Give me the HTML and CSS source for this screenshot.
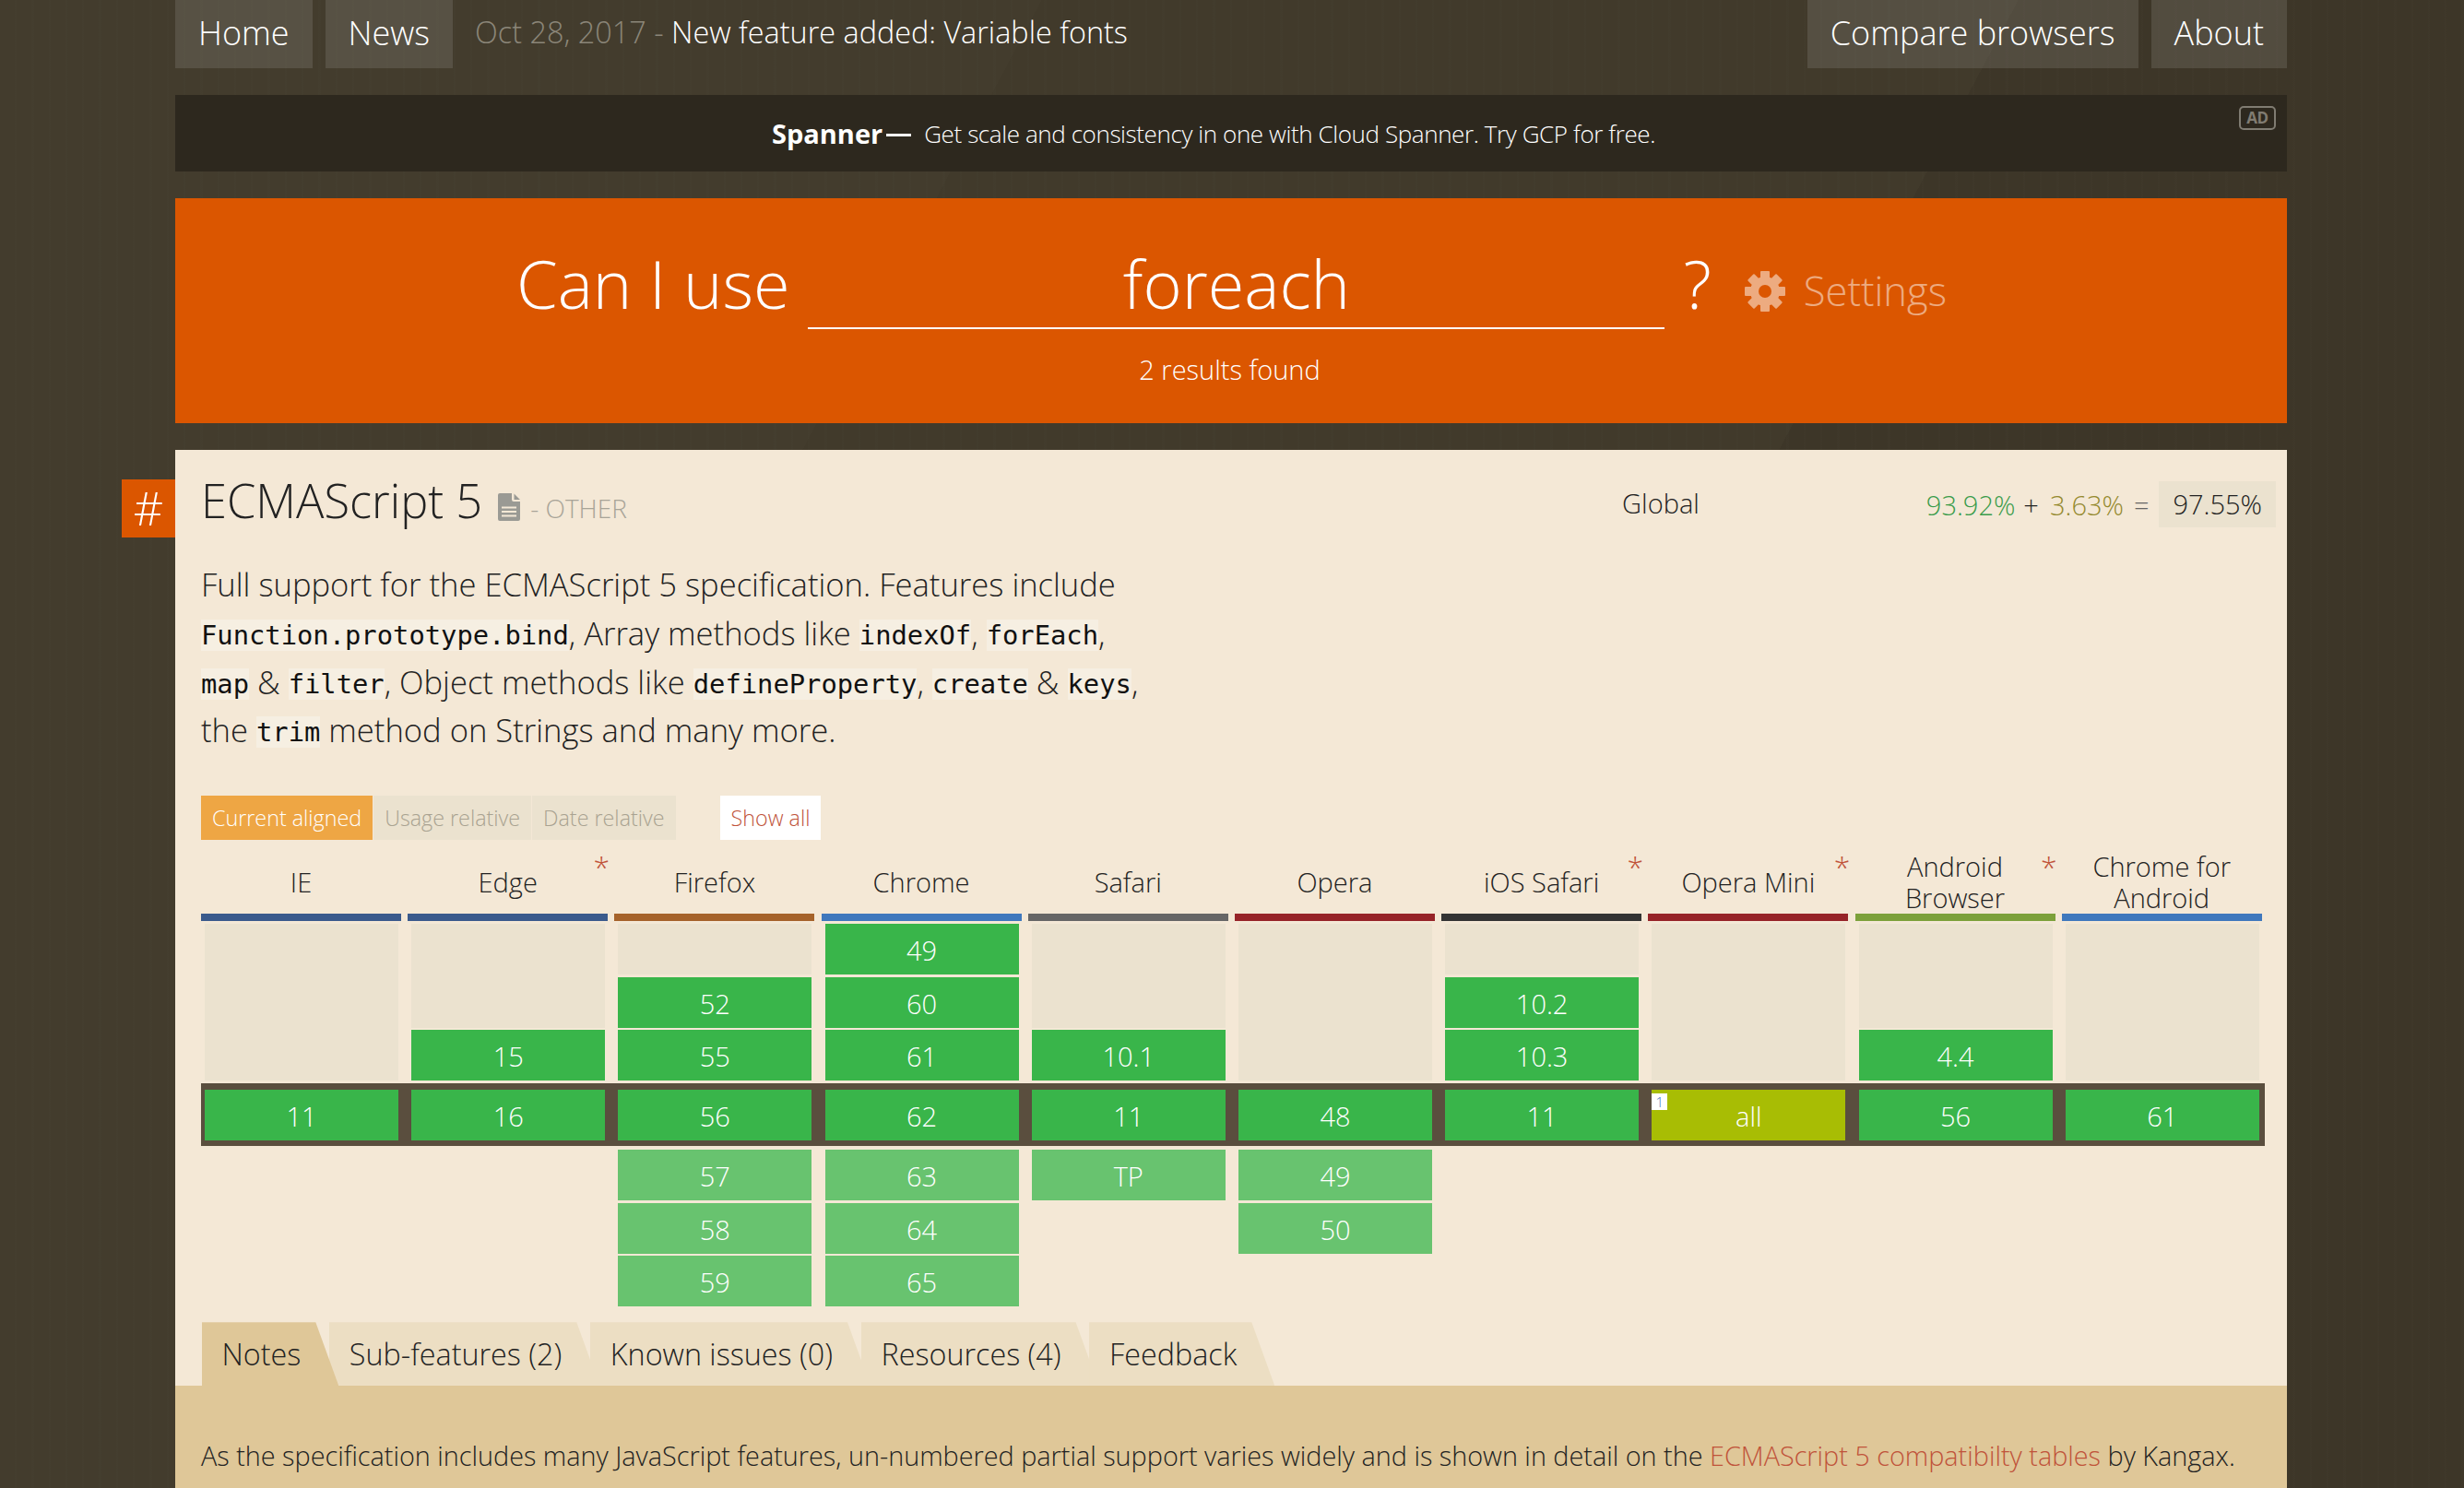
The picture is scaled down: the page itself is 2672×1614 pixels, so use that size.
FILE: index.html
```html
<!DOCTYPE html>
<html lang="en">

<head>
    <meta charset="UTF-8">
    <title>Can I use... foreach</title>
    <link rel="stylesheet" href="styles.css">
</head>

<body>
    <div class="page">
        <nav class="topnav">
            <a class="navbtn">Home</a>
            <a class="navbtn">News</a>
            <div class="newsline"><span class="newsdate">Oct 28, 2017 - </span>New feature added: Variable fonts</div>
            <a class="navbtn navbtn-push">Compare browsers</a>
            <a class="navbtn">About</a>
        </nav>

        <div class="adbar">
            <strong>Spanner</strong><i class="addash"></i><span>Get scale and consistency in one with Cloud Spanner. Try GCP for free.</span>
            <div class="adbadge">AD</div>
        </div>

        <header class="search">
            <div class="searchrow">
                <h1 class="searchlabel">Can I use</h1>
                <div class="searchinput">foreach</div>
                <div class="searchq">?</div>
                <div class="settings">
                    <svg class="gear" viewBox="0 0 44 44" width="44" height="44">
                        <g fill="#fff">
                            <rect x="17" y="0" width="10" height="44" rx="1"/>
                            <rect x="17" y="0" width="10" height="44" rx="1" transform="rotate(45 22 22)"/>
                            <rect x="17" y="0" width="10" height="44" rx="1" transform="rotate(90 22 22)"/>
                            <rect x="17" y="0" width="10" height="44" rx="1" transform="rotate(135 22 22)"/>
                        </g>
                        <circle cx="22" cy="22" r="11.5" fill="none" stroke="#fff" stroke-width="9"/>
                        <circle cx="22" cy="22" r="7" fill="#db5600"/>
                    </svg>
                    <span>Settings</span>
                </div>
            </div>
            <div class="results">2 results found</div>
        </header>

        <article class="feature">
            <a class="hash">#</a>
            <div class="featurehead">
                <h2 class="featuretitle">ECMAScript 5</h2>
                <svg class="docicon" viewBox="0 0 24 30" width="24" height="30">
                    <path fill="#9a9a94" fill-rule="evenodd" d="M2 0H15V7Q15 9 17 9H24V28Q24 30 22 30H2Q0 30 0 28V2Q0 0 2 0ZM17.500 0.500L24 7H17.500ZM4 14.500V16.500H20V14.500ZM4 19V21H20V19ZM4 23.500V25.500H20V23.500Z"/>
                </svg>
                <span class="featurecat">- OTHER</span>
                <div class="usage">
                    <span class="usagelabel">Global</span>
                    <span class="usagegreen">93.92%</span>
                    <span class="usageop">+</span>
                    <span class="usageolive">3.63%</span>
                    <span class="usageeq">=</span>
                    <span class="usagetotal">97.55%</span>
                </div>
            </div>

            <p class="featuredesc">Full support for the ECMAScript 5 specification. Features include <code>Function.prototype.bind</code>, Array methods like <code>indexOf</code>, <code>forEach</code>, <code>map</code> &amp; <code>filter</code>, Object methods like <code>defineProperty</code>, <code>create</code> &amp; <code>keys</code>, the <code>trim</code> method on Strings and many more.</p>

            <div class="viewbar">
                <a class="viewbtn viewbtn-on">Current aligned</a>
                <a class="viewbtn">Usage relative</a>
                <a class="viewbtn">Date relative</a>
                <a class="showall">Show all</a>
            </div>

            <div class="browsers">
                <div class="browser b-ie">IE</div>
                <div class="browser b-edge star">Edge</div>
                <div class="browser b-ff">Firefox</div>
                <div class="browser b-ch">Chrome</div>
                <div class="browser b-sa">Safari</div>
                <div class="browser b-op">Opera</div>
                <div class="browser b-ios star">iOS Safari</div>
                <div class="browser b-om star">Opera Mini</div>
                <div class="browser b-an star">Android<br>Browser</div>
                <div class="browser b-ca">Chrome for<br>Android</div>
            </div>

            <div class="cols cols-past">
                <div class="col"><div class="cell none fill"></div></div>
                <div class="col"><div class="cell none fill"></div><div class="cell yes">15</div></div>
                <div class="col"><div class="cell none fill"></div><div class="cell yes">52</div><div class="cell yes">55</div></div>
                <div class="col"><div class="cell yes">49</div><div class="cell yes">60</div><div class="cell yes">61</div></div>
                <div class="col"><div class="cell none fill"></div><div class="cell yes">10.1</div></div>
                <div class="col"><div class="cell none fill"></div></div>
                <div class="col"><div class="cell none fill"></div><div class="cell yes">10.2</div><div class="cell yes">10.3</div></div>
                <div class="col"><div class="cell none fill"></div></div>
                <div class="col"><div class="cell none fill"></div><div class="cell yes">4.4</div></div>
                <div class="col"><div class="cell none fill"></div></div>
            </div>

            <div class="cols cols-now">
                <div class="col"><div class="cell yes">11</div></div>
                <div class="col"><div class="cell yes">16</div></div>
                <div class="col"><div class="cell yes">56</div></div>
                <div class="col"><div class="cell yes">62</div></div>
                <div class="col"><div class="cell yes">11</div></div>
                <div class="col"><div class="cell yes">48</div></div>
                <div class="col"><div class="cell yes">11</div></div>
                <div class="col"><div class="cell partial"><sup class="noteflag">1</sup>all</div></div>
                <div class="col"><div class="cell yes">56</div></div>
                <div class="col"><div class="cell yes">61</div></div>
            </div>

            <div class="cols cols-future">
                <div class="col"></div>
                <div class="col"></div>
                <div class="col"><div class="cell soon">57</div><div class="cell soon">58</div><div class="cell soon">59</div></div>
                <div class="col"><div class="cell soon">63</div><div class="cell soon">64</div><div class="cell soon">65</div></div>
                <div class="col"><div class="cell soon">TP</div></div>
                <div class="col"><div class="cell soon">49</div><div class="cell soon">50</div></div>
                <div class="col"></div>
                <div class="col"></div>
                <div class="col"></div>
                <div class="col"></div>
            </div>

            <div class="tabs">
                <a class="tab tab-on">Notes</a>
                <a class="tab">Sub-features (2)</a>
                <a class="tab">Known issues (0)</a>
                <a class="tab">Resources (4)</a>
                <a class="tab">Feedback</a>
            </div>
            <div class="tabbody">
                <p>As the specification includes many JavaScript features, un-numbered partial support varies widely and is shown in detail on the <a class="notelink">ECMAScript 5 compatibilty tables</a> by Kangax.</p>
            </div>
        </article>
    </div>
</body>

</html>
```

FILE: styles.css
```css
html, body {
    margin: 0;
    height: 1614px;
    overflow: hidden;
}

body {
    background-color: #3f3829;
    background-image:
        repeating-linear-gradient(90deg, transparent 0 16px, rgba(255, 255, 255, 0.008) 16px 18.300px),
        linear-gradient(118deg, #433c2d 0 32%, #413a2b 32% 62%, #3d3628 62% 100%);
    font-family: "Open Sans", "Noto Sans", sans-serif;
    font-weight: 300;
    color: #222;
}

.page {
    width: 2290px;
    margin-left: 190px;
}

/* top bar */
.topnav {
    display: flex;
    height: 74px;
    gap: 14px;
}

.navbtn {
    padding: 0 25px;
    background-color: rgba(255, 255, 255, 0.11);
    color: #fff;
    font-size: 36px;
    line-height: 72px;
}

.navbtn-push {
    margin-left: auto;
}

.newsline {
    margin-left: 10px;
    color: #fff;
    font-size: 32.400px;
    line-height: 69px;
}

.newsdate {
    color: #8b8679;
}

/* ad */
.adbar {
    position: relative;
    display: flex;
    justify-content: center;
    align-items: center;
    height: 83px;
    margin-top: 29px;
    padding-right: 38px;
    background-color: #2d281e;
    color: #fff;
    font-size: 26px;
    letter-spacing: -0.4px;
}

.adbar strong {
    font-size: 29px;
    font-weight: 700;
    letter-spacing: 0;
}

.addash {
    width: 27px;
    height: 3px;
    margin: 4px 14px 0 4px;
    background-color: #fff;
}

.adbadge {
    position: absolute;
    top: 12px;
    right: 12px;
    width: 36px;
    height: 22px;
    border: 2px solid #807c72;
    border-radius: 5px;
    color: #807c72;
    font-size: 17px;
    font-weight: 700;
    line-height: 22px;
    text-align: center;
}

/* search */
.search {
    height: 244px;
    margin-top: 29px;
    background-color: #db5600;
    color: #fff;
}

.searchrow {
    display: flex;
    align-items: flex-start;
    padding: 44px 0 0 370px;
}

.searchlabel {
    margin: 0;
    font-size: 72px;
    font-weight: 300;
    line-height: 96px;
}

.searchinput {
    width: 929px;
    height: 96px;
    margin-left: 20px;
    border-bottom: 2px solid #fff;
    font-size: 72px;
    line-height: 96px;
    text-align: center;
}

.searchq {
    margin-left: 20px;
    font-size: 72px;
    line-height: 96px;
}

.settings {
    display: flex;
    align-items: center;
    gap: 20px;
    margin: 27px 0 0 36px;
    font-size: 43.500px;
    line-height: 60px;
    opacity: 0.5;
}

.results {
    margin-top: 24px;
    padding-right: 3px;
    font-size: 29px;
    line-height: 40px;
    text-align: center;
}

/* feature card */
.feature {
    position: relative;
    margin-top: 29px;
    padding-top: 1px;
    background-color: #f4e8d6;
}

.hash {
    position: absolute;
    top: 32px;
    left: -58px;
    width: 58px;
    height: 63px;
    background-color: #db5600;
    color: #fff;
    font-size: 50px;
    line-height: 63px;
    text-align: center;
}

.featurehead {
    display: flex;
    align-items: center;
    height: 50px;
    margin-top: 33px;
    padding: 0 12px 0 28px;
}

.featuretitle {
    margin: -8px 0 0;
    font-size: 50.600px;
    font-weight: 300;
    line-height: 60px;
    white-space: nowrap;
}

.docicon {
    margin: 6px 0 0 17px;
}

.featurecat {
    margin: 8px 0 0 11px;
    color: #a8a498;
    font-size: 28px;
}

.usage {
    display: flex;
    align-items: center;
    margin-left: auto;
    font-size: 29px;
}

.usagelabel {
    margin-right: 246px;
    margin-top: -4px;
}

.usagegreen {
    color: #3b9c4b;
}

.usageop {
    margin: 0 12px 0 9px;
}

.usageolive {
    color: #948a2f;
}

.usageeq {
    margin: 0 11px 0 11px;
    color: #666;
}

.usagetotal {
    padding: 0 15px;
    background-color: #ebe2cf;
    line-height: 50px;
}

.featuredesc {
    width: 1030px;
    margin: 36px 0 0 28px;
    font-size: 34.600px;
    line-height: 52.800px;
}

code {
    background-color: #f6efe2;
    color: #111;
    font-family: "DejaVu Sans Mono", monospace;
    font-size: 28.800px;
    font-weight: 400;
    line-height: 0;
    vertical-align: 1px;
}

/* view buttons */
.viewbar {
    display: flex;
    height: 48px;
    margin: 44px 0 0 28px;
    font-size: 23.300px;
    line-height: 48px;
}

.viewbtn {
    margin-right: 1px;
    padding: 0 12px;
    background-color: #ebe2cf;
    color: #a9a291;
}

.viewbtn-on {
    background-color: #eea644;
    color: #fff;
}

.showall {
    margin-left: 47px;
    padding: 0 12px;
    background-color: #fff;
    color: #c0533a;
}

/* browser table */
.browsers,
.cols {
    display: grid;
    grid-template-columns: repeat(10, 217px);
    column-gap: 7.200px;
    margin-left: 28px;
}

.browsers {
    height: 88px;
}

.browser {
    position: relative;
    display: flex;
    align-items: center;
    justify-content: center;
    box-sizing: border-box;
    height: 80px;
    padding-top: 3px;
    border-bottom: 8px solid #444;
    font-size: 29px;
    line-height: 34px;
    text-align: center;
    align-self: end;
}

.star::after {
    content: "*";
    position: absolute;
    top: 2px;
    right: -2px;
    color: #c0533a;
    font-size: 32px;
    line-height: 38px;
}

.b-ie, .b-edge { border-color: #3a5a8c; }
.b-ff { border-color: #a5622a; }
.b-ch, .b-ca { border-color: #3f78bd; }
.b-sa { border-color: #666666; }
.b-op, .b-om { border-color: #962328; }
.b-ios { border-color: #333333; }
.b-an { border-color: #7ca03a; }

.cols-past {
    margin-top: 3px;
    height: 170px;
}

.cols-now {
    box-sizing: border-box;
    width: 2238px;
    height: 68px;
    margin-top: 3px;
    padding-top: 7px;
    background-color: #5a4e3e;
}

.cols-future {
    height: 170px;
    margin-top: 4px;
}

.col {
    display: flex;
    flex-direction: column;
    gap: 2.500px;
    padding: 0 3px 0 4px;
}

.cell {
    position: relative;
    flex: none;
    height: 55px;
    color: #fff;
    font-size: 29px;
    line-height: 58px;
    text-align: center;
}

.fill {
    flex: 1;
}

.none {
    background-color: #ebe2cf;
}

.yes {
    background-color: #39b54a;
}

.soon {
    background-color: #68c36f;
}

.partial {
    background-color: #a8bd04;
}

.noteflag {
    position: absolute;
    top: 4px;
    left: 0;
    width: 17px;
    height: 18px;
    background-color: #fff;
    color: #3f78bd;
    font-size: 15px;
    line-height: 18px;
}

/* tabs */
.tabs {
    display: flex;
    height: 69px;
    margin: 17px 0 0 28.500px;
}

.tab {
    padding: 0 41px 0 22px;
    margin-right: -10.500px;
    background-color: #ecdec3;
    clip-path: polygon(0 0, calc(100% - 25px) 0, 100% 100%, 0 100%);
    font-size: 32.300px;
    line-height: 69px;
}

.tab-on {
    position: relative;
    z-index: 1;
    background-color: #dfc798;
}

.tabbody {
    height: 106px;
    padding: 56px 28px 0;
    background-color: #dfc798;
    font-size: 28.800px;
    line-height: 40px;
}

.tabbody p {
    margin: 0;
}

.notelink {
    color: #c0533a;
}
```
